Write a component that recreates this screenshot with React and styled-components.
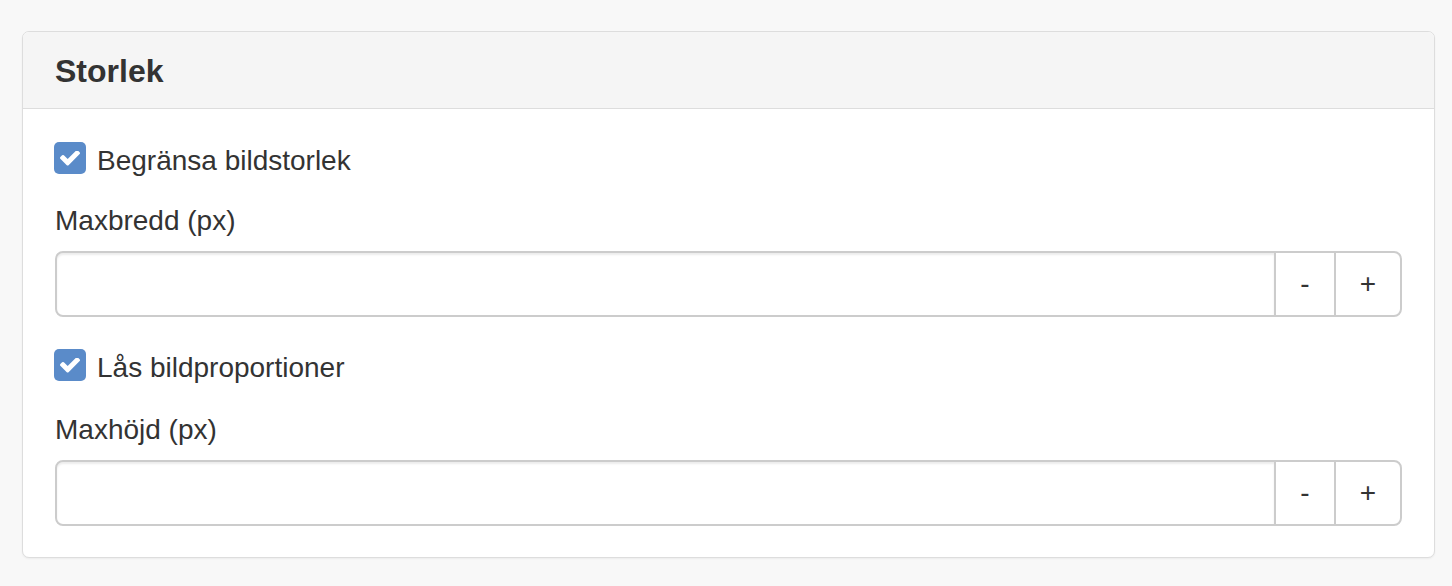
import styled, { createGlobalStyle } from 'styled-components'

const GlobalStyle = createGlobalStyle`
    html, body {
        margin: 0;
        background: #f8f8f8;
    }
    body {
        font-family: "Liberation Sans", Arial, sans-serif;
        color: #333;
    }
`

const Page = styled.div`
    padding: 31px 17px 28px 22px;
`

const Panel = styled.section`
    background: #fff;
    border: 1px solid #ddd;
    border-radius: 7px;
    box-shadow: 0 1px 2px rgba(0, 0, 0, 0.05);
    overflow: hidden;
`

const PanelHeading = styled.div`
    background: #f5f5f5;
    border-bottom: 1px solid #ddd;
    padding: 21px 32px 19px;
`

const PanelTitle = styled.h3`
    margin: 0;
    font-size: 32px;
    line-height: 36px;
    font-weight: 700;
`

const PanelBody = styled.div`
    padding: 32px 32px 31px;
`

const CheckRow = styled.label`
    display: flex;
    align-items: flex-start;
    gap: 11px;
    font-size: 28px;
    line-height: 40px;
    margin-bottom: ${p => p.$gap || 20}px;
`

const Box = styled.span`
    flex: 0 0 32px;
    width: 32px;
    height: 32px;
    margin: 1px 0 0 -1px;
    border-radius: 5px;
    background: #5a8bc9;
    display: inline-flex;
    align-items: center;
    justify-content: center;
`

const Label = styled.div`
    font-size: 28px;
    line-height: 40px;
    margin-bottom: 10px;
`

const InputGroup = styled.div`
    display: flex;
    height: 66px;
    margin-bottom: ${p => p.$last ? 0 : 31}px;
`

const Field = styled.input`
    flex: 1;
    min-width: 0;
    box-sizing: border-box;
    height: 66px;
    border: 2px solid #ccc;
    border-radius: 8px 0 0 8px;
    box-shadow: inset 0 2px 2px rgba(0, 0, 0, 0.075);
    padding: 0 24px;
    font: inherit;
    font-size: 28px;
    outline: none;
`

const StepButton = styled.button`
    box-sizing: border-box;
    height: 66px;
    margin-left: -2px;
    padding: 0 24px;
    background: #fff;
    border: 2px solid #ccc;
    border-radius: ${p => p.$end ? '0 8px 8px 0' : '0'};
    font-family: "Liberation Sans", Arial, sans-serif;
    font-size: 28px;
    color: #333;
    line-height: 1;
`

// font-awesome style check mark
const Check = () => (
    <svg width="20" height="15" viewBox="121 430 1550 1092">
        <path
            fill="#fff"
            d="M1671 566q0 40-28 68l-724 724-136 136q-28 28-68 28t-68-28l-136-136-362-362q-28-28-28-68t28-68l136-136q28-28 68-28t68 28l294 295 656-657q28-28 68-28t68 28l136 136q28 28 28 68z"
        />
    </svg>
)

const Stepper = ({ last }) => (
    <InputGroup $last={last}>
        <Field type="text" />
        <StepButton>-</StepButton>
        <StepButton $end>+</StepButton>
    </InputGroup>
)

export default function App() {
    return (
        <Page>
            <GlobalStyle />
            <Panel>
                <PanelHeading>
                    <PanelTitle>Storlek</PanelTitle>
                </PanelHeading>
                <PanelBody>
                    <CheckRow>
                        <Box><Check /></Box>
                        Begränsa bildstorlek
                    </CheckRow>
                    <Label>Maxbredd (px)</Label>
                    <Stepper />
                    <CheckRow $gap={22}>
                        <Box><Check /></Box>
                        Lås bildproportioner
                    </CheckRow>
                    <Label>Maxhöjd (px)</Label>
                    <Stepper last />
                </PanelBody>
            </Panel>
        </Page>
    )
}
